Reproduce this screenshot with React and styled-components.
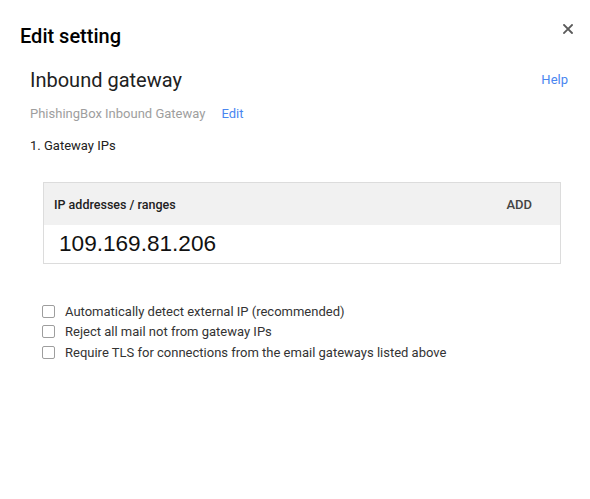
import React from 'react';
import styled, { createGlobalStyle } from 'styled-components';

const GlobalStyle = createGlobalStyle`
    html, body {
        margin: 0;
        padding: 0;
        background: #fff;
    }
    body {
        font-family: Roboto, "Liberation Sans", Arial, sans-serif;
        color: #212121;
    }
`;

const Dialog = styled.div`
    width: 590px;
    height: 499px;
    box-sizing: border-box;
    padding: 24px 17px 0 20px;
    background: #fff;
`;

const Header = styled.div`
    display: flex;
    justify-content: space-between;
    align-items: flex-start;
`;

const Title = styled.h1`
    margin: 0;
    font-size: 20px;
    line-height: 24px;
    font-weight: 500;
    color: #000;
`;

const CloseButton = styled.button`
    border: 0;
    padding: 0;
    background: none;
    width: 10px;
    height: 10px;
    display: flex;
    cursor: pointer;
`;

const Body = styled.div`
    padding: 0 0 0 10px;
`;

const SectionRow = styled.div`
    display: flex;
    justify-content: space-between;
    align-items: flex-start;
    margin-top: 19px;
`;

const SectionTitle = styled.h2`
    margin: 0;
    font-size: 20px;
    line-height: 26px;
    font-weight: 400;
    color: #212121;
`;

const Link = styled.a`
    font-size: 13px;
    line-height: ${p => p.$lh || 20}px;
    color: #4a86f0;
    text-decoration: none;
    cursor: pointer;
    margin-right: ${p => p.$right || 0}px;
`;

const SubRow = styled.div`
    display: flex;
    align-items: center;
    gap: 16px;
    margin-top: 11px;
`;

const SubText = styled.span`
    font-size: 13px;
    line-height: 20px;
    color: #9e9e9e;
`;

const StepLabel = styled.div`
    margin-top: 14px;
    font-size: 13px;
    line-height: 16px;
    color: #212121;
`;

const Table = styled.div`
    margin: 28px 0 0 13px;
    width: 518px;
    border: 1px solid #dcdcdc;
    box-sizing: border-box;
`;

const TableHead = styled.div`
    height: 42px;
    display: flex;
    align-items: center;
    justify-content: space-between;
    padding: 0 28px 0 10px;
    background: #f1f1f1;
    font-size: 12.5px;
    font-weight: 500;
    color: #212121;
`;

const AddButton = styled.span`
    font-size: 13px;
    font-weight: 500;
    color: #444;
    cursor: pointer;
`;

const ValueRow = styled.div`
    height: 38px;
    line-height: 38px;
    padding-left: 15px;
    font-family: "Liberation Sans", Arial, sans-serif;
    font-size: 22.6px;
    color: #111;
`;

const Options = styled.div`
    margin: 37px 0 0 12px;
    display: flex;
    flex-direction: column;
`;

const Option = styled.label`
    display: flex;
    align-items: center;
    height: 20.5px;
    font-size: 13px;
    color: #333;
    cursor: pointer;
`;

const Box = styled.span`
    width: 13px;
    height: 13px;
    box-sizing: border-box;
    border: 1px solid #9e9e9e;
    border-radius: 2px;
    margin-right: 10px;
    background: #fff;
`;

const options = [
    'Automatically detect external IP (recommended)',
    'Reject all mail not from gateway IPs',
    'Require TLS for connections from the email gateways listed above',
];

export default function App() {
    return (
        <Dialog>
            <GlobalStyle />
            <Header>
                <Title>Edit setting</Title>
                <CloseButton aria-label="Close">
                    <svg width="10" height="10" viewBox="0 0 10 10">
                        <path d="M1 1 L9 9 M9 1 L1 9" stroke="#5a5a5a" strokeWidth="1.8" strokeLinecap="square" />
                    </svg>
                </CloseButton>
            </Header>
            <Body>
                <SectionRow>
                    <SectionTitle>Inbound gateway</SectionTitle>
                    <Link $lh={26} $right={5}>Help</Link>
                </SectionRow>
                <SubRow>
                    <SubText>PhishingBox Inbound Gateway</SubText>
                    <Link>Edit</Link>
                </SubRow>
                <StepLabel>1. Gateway IPs</StepLabel>
                <Table>
                    <TableHead>
                        <span>IP addresses / ranges</span>
                        <AddButton>ADD</AddButton>
                    </TableHead>
                    <ValueRow>109.169.81.206</ValueRow>
                </Table>
                <Options>
                    {options.map(text => (
                        <Option key={text}>
                            <Box />
                            {text}
                        </Option>
                    ))}
                </Options>
            </Body>
        </Dialog>
    );
}
